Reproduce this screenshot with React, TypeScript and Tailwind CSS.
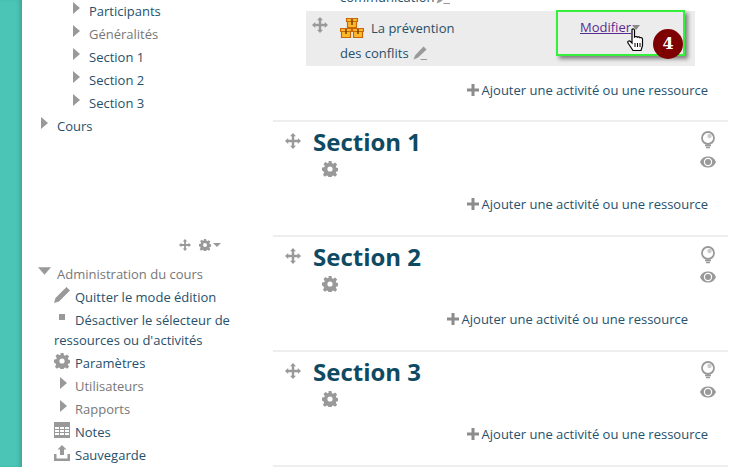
const Move = ({ c = "" }: { c?: string }) => (
  <svg viewBox="0 0 16 16" className={c} fill="#999">
    <path d="M8 0 11 3.2H9.2V6.8H12.8V5L16 8 12.8 11V9.2H9.2V12.8H11L8 16 5 12.8H6.8V9.2H3.2V11L0 8 3.2 5V6.8H6.8V3.2H5Z" />
  </svg>
);
const Gear = ({ c = "" }: { c?: string }) => (
  <svg viewBox="0 0 16 16" className={c} fill="#999">
    <path fillRule="evenodd" d="M6.5 0h3l.4 2.2 1.3.6L13.1 1.5l2 2-1.3 1.9.6 1.3 2.2.4v3l-2.2.4-.6 1.3 1.3 1.9-2 2-1.9-1.3-1.3.6-.4 2.2h-3l-.4-2.2-1.3-.6-1.9 1.3-2-2 1.3-1.9-.6-1.3L0 9.6v-3l2.2-.4.6-1.3L1.5 3l2-2 1.9 1.3 1.3-.6ZM8 5.4a2.6 2.6 0 1 0 0 5.2 2.600 2.600 0 0 0 0-5.2Z" />
  </svg>
);
const Pencil = ({ c = "" }: { c?: string }) => (
  <svg viewBox="0 0 16 16" className={c} fill="#999">
    <path d="M12 .5 15.500 4 5.500 13.500 .5 15.500 2.500 10.500ZM8.500 14.800H16V16H8.500Z" />
  </svg>
);
const BigPencil = ({ c = "" }: { c?: string }) => (
  <svg viewBox="0 0 16 16" className={c} fill="#999">
    <path d="M12.500 0 16 3.500 5 14.500 0 16 1.500 11Z" />
  </svg>
);
const Arrow = () => (
  <svg viewBox="0 0 8 14" className="w-2 h-3.5 shrink-0" fill="#999">
    <path d="M0 1 7 7 0 13Z" />
  </svg>
);
const Plus = () => (
  <svg viewBox="0 0 12 12" className="w-3 h-3 shrink-0" fill="#8c8c8c">
    <path d="M4.5 0h3v4.5H12v3H7.5V12h-3V7.5H0v-3h4.5Z" />
  </svg>
);
const Bulb = () => (
  <svg viewBox="0 0 16 18" className="w-4 h-[18px] shrink-0" fill="none" stroke="#999">
    <circle cx="8" cy="7" r="6" strokeWidth="1.8" />
    <circle cx="9.5" cy="5" r="2.200" fill="#ccc" stroke="none" />
    <path d="M5 14.500h6M6 16.500h4" strokeWidth="1.300" />
  </svg>
);
const Eye = () => (
  <svg viewBox="0 0 16 12" className="w-4 h-3 shrink-0" fill="#999">
    <path fillRule="evenodd" d="M0 6C2 1.500 5 .5 8 .5s6 1 8 5.500c-2 4.500-5 5.500-8 5.500S2 10.500 0 6Zm8-4.200a4.200 4.200 0 1 0 0 8.400 4.200 4.200 0 0 0 0-8.400Z" />
    <circle cx="8" cy="6" r="3" />
  </svg>
);
const Box = () => (
  <svg viewBox="0 0 24 20" className="w-6 h-5 shrink-0" stroke="#c8660a" strokeWidth="1.200">
    <g fill="#fbb82a">
      <path d="M6.500.5h11v3h-11ZM7.500 3.500h9v6h-9Z" />
      <path d="M.5 10.500h11v3H.5ZM1.500 13.500h9v6h-9Z" />
      <path d="M12.500 10.500h11v3h-11ZM13.500 13.500h9v6h-9Z" />
    </g>
    <path d="M12 1v6M6 11v5M18 11v5" stroke="#7a3c05" strokeWidth="1.500" />
  </svg>
);
const Hand = () => (
  <svg viewBox="0 0 18 24" className="w-[18px] h-6">
    <path
      d="M5 1.500c1 -1 2.500 -.5 2.500 1V9c.8-.7 2.200-.7 2.800.2.800-.6 2.200-.5 2.700.5 1-.5 2.500 0 2.500 1.500V17c0 2-1 3-1.500 5.500H6L1 15c-1-1.500 1-3 2.500-1.500L5 15Z"
      fill="#fff"
      stroke="#000"
      strokeWidth="1.200"
    />
    <path d="M8 15v4M10.500 15v4M13 15v4" stroke="#000" strokeWidth="1" />
  </svg>
);

const Branch = ({ label, grey, pad }: { label: string; grey?: boolean; pad: string }) => (
  <div className={`flex h-[23px] items-center ${pad}`}>
    <div className="w-[16px] -mt-1.5">
      <Arrow />
    </div>
    <span className={grey ? "text-[#777]" : ""}>{label}</span>
  </div>
);

const IconRow = ({ icon, label }: { icon: React.ReactNode; label: string }) => (
  <div className="flex h-[23px] items-center pl-[32px]">
    <div className="w-[21px] -mt-1 flex">{icon}</div>
    <span>{label}</span>
  </div>
);

const Add = ({ pr = "pr-5" }: { pr?: string }) => (
  <div className={`flex justify-end items-center gap-[3px] h-5 ${pr}`}>
    <Plus />
    <span>Ajouter une activité ou une ressource</span>
  </div>
);

const Section = ({ title, pr }: { title: string; pr?: string }) => (
  <div className="h-[115px] border-t-2 border-[#eee] flex flex-col relative">
    <div className="flex pl-3 pt-[7px] h-[37px] justify-between pr-[12px]">
      <div className="flex gap-3">
        <Move c="w-4 h-4 mt-[4px]" />
        <h2 className="text-[24px] leading-[24px] mt-[1px] font-bold text-[#0f4a63]">{title}</h2>
      </div>
      <div className="flex flex-col items-center gap-[7px] pt-[2px]">
        <Bulb />
        <Eye />
      </div>
    </div>
    <div className="pl-[49px] mt-[2px]">
      <Gear c="w-4 h-4" />
    </div>
    <div className="mt-[17px]">
      <Add pr={pr} />
    </div>
  </div>
);

export default function App() {
  return (
    <div className="w-[745px] h-[467px] overflow-hidden flex bg-white text-[13px] leading-[20px] text-[#26506b] font-['Open_Sans',sans-serif]">
      <div className="w-[22px] h-full bg-[#4bc5b6] shadow-[inset_-4px_0_4px_-2px_rgba(0,0,0,0.18)] shrink-0" />
      <aside className="w-[251px] shrink-0 flex flex-col -mt-px">
        <Branch label="Participants" pad="pl-[51px]" />
        <Branch label="Généralités" grey pad="pl-[51px]" />
        <Branch label="Section 1" pad="pl-[51px]" />
        <Branch label="Section 2" pad="pl-[51px]" />
        <Branch label="Section 3" pad="pl-[51px]" />
        <Branch label="Cours" pad="pl-[19px]" />
        <div className="flex items-center justify-end gap-[8px] pr-[52px] mt-[100px] h-4">
          <Move c="w-3 h-3" />
          <div className="flex items-center gap-[2px]">
            <Gear c="w-3 h-3" />
            <svg viewBox="0 0 8 4" className="w-2 h-1" fill="#999">
              <path d="M0 0h8L4 4Z" />
            </svg>
          </div>
        </div>
        <div className="flex h-[23px] items-center pl-[16px] mt-[9px]">
          <svg viewBox="0 0 14 8" className="w-[13px] h-2 shrink-0 mr-[6px] -mt-1.5" fill="#999">
            <path d="M0 0h14L7 8Z" />
          </svg>
          <span className="text-[#777]">Administration du cours</span>
        </div>
        <IconRow icon={<BigPencil c="w-4 h-4" />} label="Quitter le mode édition" />
        <div className="pl-[32px] h-[43px] pt-[2px]">
          <div className="flex items-center">
            <div className="w-[21px] pl-[5px] -mt-1.5">
              <div className="w-[6px] h-[6px] bg-[#999]" />
            </div>
            <span>Désactiver le sélecteur de</span>
          </div>
          <div>ressources ou d'activités</div>
        </div>
        <IconRow icon={<Gear c="w-4 h-4" />} label="Paramètres" />
        <div className="flex h-[23px] items-center pl-[38px]">
          <div className="w-[15px] -mt-1.5">
            <Arrow />
          </div>
          <span className="text-[#777]">Utilisateurs</span>
        </div>
        <div className="flex h-[23px] items-center pl-[38px]">
          <div className="w-[15px] -mt-1.5">
            <Arrow />
          </div>
          <span className="text-[#777]">Rapports</span>
        </div>
        <IconRow
          icon={
            <svg viewBox="0 0 16 16" className="w-4 h-4" fill="#999">
              <path
                fillRule="evenodd"
                d="M0 0h16v16H0ZM1 5v2h4V5Zm5 0v2h4V5Zm5 0v2h4V5ZM1 8v2h4V8Zm5 0v2h4V8Zm5 0v2h4V8ZM1 11v2h4v-2Zm5 0v2h4v-2Zm5 0v2h4v-2Z"
              />
            </svg>
          }
          label="Notes"
        />
        <IconRow
          icon={
            <svg viewBox="0 0 16 16" className="w-4 h-4" fill="#999">
              <path d="M8 0 12.500 4.500H10V10H6V4.500H3.500ZM0 9h2.500v4.500h11V9H16v7H0Z" />
            </svg>
          }
          label="Sauvegarde"
        />
      </aside>
      <main className="w-[455px] shrink-0 flex flex-col">
        <div className="h-[120px] flex flex-col">
          <div className="h-[11px] overflow-hidden relative mx-[33px]">
            <div className="absolute top-[-13px] left-[34px] flex items-center gap-[1px] whitespace-nowrap">
              <span>communication</span>
              <Pencil c="w-3.5 h-3.5" />
            </div>
          </div>
          <div className="relative h-[55px] bg-[#ececec] flex mx-[33px]">
            <div className="pl-[6px] pt-[6px] w-[34px] shrink-0">
              <Move c="w-4 h-4" />
            </div>
            <div className="w-[200px]">
              <div className="flex items-center gap-[7px] h-[25px] pt-[9px]">
                <Box />
                <span>La prévention</span>
              </div>
              <div className="flex items-center gap-[4px] h-[25px] mt-[4px]">
                <span>des conflits</span>
                <Pencil c="w-3.5 h-3.5" />
              </div>
            </div>
            <div className="absolute left-[250px] top-[-1px] w-[129px] h-[46px] border-2 border-[#35f03b] shadow-[3px_3px_4px_rgba(0,0,0,0.45)] flex pl-[22px] pt-[5px]">
              <span className="text-[#5b2a90] underline">Modifier</span>
              <svg viewBox="0 0 8 5" className="w-2 h-[5px] mt-[8px] ml-[1px]" fill="#888">
                <path d="M0 0h8L4 5Z" />
              </svg>
            </div>
            <div className="absolute left-[321px] top-[17px]">
              <Hand />
            </div>
            <div className="absolute left-[347px] top-[18px] w-[30px] h-[30px] rounded-full bg-[#7f0000] text-white flex items-center justify-center font-bold text-[16px] font-['DejaVu_Serif',serif]">
              4
            </div>
          </div>
          <div className="mt-[14px]">
            <Add />
          </div>
        </div>
        <Section title="Section 1" />
        <Section title="Section 2" pr="pr-[40px]" />
        <Section title="Section 3" />
        <div className="border-t-2 border-[#eee]" />
      </main>
    </div>
  );
}
